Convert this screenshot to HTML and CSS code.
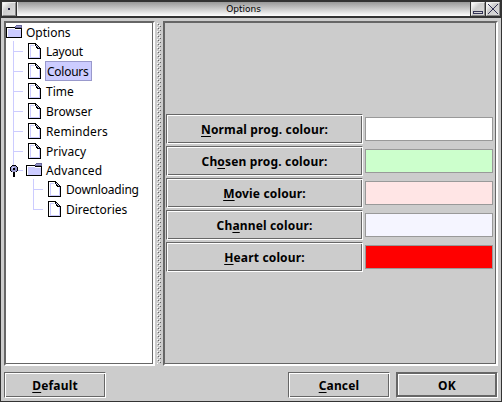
FILE: index.html
```html
<!DOCTYPE html>
<html lang="en">
<head>
<meta charset="utf-8">
<title>Options</title>
<link rel="stylesheet" href="styles.css">
</head>
<body>
<svg class="defs" width="0" height="0">
  <symbol id="folder" viewBox="0 0 16 13">
    <path fill="#000" d="M0 2h16v11H0z"/>
    <path fill="#ccf" d="M1 3h14v9H1z"/>
    <path fill="#fff" d="M1 3h8v1H2v8H1zM9 4h6v1H9z"/>
    <path fill="#669" d="M9 1h1V0h6v3H9z"/>
    <path fill="#000" d="M8 2h1v1H8zM9 3h7v1H9z"/>
    <path fill="#99c" d="M10 1h5v1h-5z"/>
  </symbol>
  <symbol id="leaf" viewBox="0 0 13 16">
    <path fill="#000" d="M0 0h8v1h1v1h1v1h1v1h1v1h1v11H0z"/>
    <path fill="#fff" d="M1 1h6v1h1v3h1v1h3v9H1z"/>
    <path fill="#ccf" d="M2 2h1v12H2zM2 14h10v1H2zM11 6h1v9h-1zM2 2h4v1H2zM8 2h1v1H8zM9 3h1v1H9zM10 4h1v1h-1z"/>
    <path fill="#000" d="M7 1h1v2H7zM8 3h1v2H8zM9 5h3v1H9z"/>
  </symbol>
  <symbol id="handle" viewBox="0 0 8 13">
    <path fill="#000" d="M2 1h4v1h1v1h1v4H7v1H5v5H3V8H1V7H0V3h1V2h1z"/>
    <path fill="#99c" d="M2 2h4v1h1v4H6v1H2V7H1V3h1z"/>
    <path fill="#000" d="M3 4h2v2H3zM3 8h2v1H3z"/>
    <path fill="#ccf" d="M2 3h2v1H3v1H2z"/>
  </symbol>
</svg>
<div class="window">
  <header class="titlebar">
    <div class="tb-btn"><svg width="14" height="14"><path fill="#224" d="M6 6h2v2H6z"/></svg></div>
    <div class="title">Options</div>
    <div class="tb-btn"><svg width="14" height="14"><path fill="none" stroke="#335" d="M2.5 9.5h9v2h-9z"/></svg></div>
    <div class="tb-btn"><svg width="14" height="14"><path fill="none" stroke="#335" d="M2 2L12 12M12 2L2 12"/></svg></div>
  </header>
  <main class="split">
    <div class="pane tree">
      <div class="row branch"><svg class="folder"><use href="#folder"/></svg><span>Options</span></div>
      <div class="children">
        <div class="row"><svg class="leaf"><use href="#leaf"/></svg><span class="tight">Layout</span></div>
        <div class="row"><svg class="leaf"><use href="#leaf"/></svg><span class="selected">Colours</span></div>
        <div class="row"><svg class="leaf"><use href="#leaf"/></svg><span>Time</span></div>
        <div class="row"><svg class="leaf"><use href="#leaf"/></svg><span>Browser</span></div>
        <div class="row"><svg class="leaf"><use href="#leaf"/></svg><span class="wide">Reminders</span></div>
        <div class="row"><svg class="leaf"><use href="#leaf"/></svg><span>Privacy</span></div>
        <div class="row branch"><svg class="handle"><use href="#handle"/></svg><svg class="folder"><use href="#folder"/></svg><span class="wide">Advanced</span></div>
        <div class="children">
          <div class="row"><svg class="leaf"><use href="#leaf"/></svg><span class="tight">Downloading</span></div>
          <div class="row"><svg class="leaf"><use href="#leaf"/></svg><span>Directories</span></div>
        </div>
      </div>
    </div>
    <div class="divider"></div>
    <div class="pane settings">
      <div class="setting"><button class="btn"><span><u>N</u>ormal prog. colour:</span></button><div class="swatch normal"></div></div>
      <div class="setting"><button class="btn"><span>Ch<u>o</u>sen prog. colour:</span></button><div class="swatch chosen"></div></div>
      <div class="setting"><button class="btn"><span><u>M</u>ovie colour:</span></button><div class="swatch movie"></div></div>
      <div class="setting"><button class="btn"><span>Ch<u>a</u>nnel colour:</span></button><div class="swatch channel"></div></div>
      <div class="setting"><button class="btn"><span><u>H</u>eart colour:</span></button><div class="swatch heart"></div></div>
    </div>
  </main>
  <footer class="actions">
    <button class="btn"><span><u>D</u>efault</span></button>
    <div class="gap"></div>
    <button class="btn"><span><u>C</u>ancel</span></button>
    <button class="btn primary"><span>OK</span></button>
  </footer>
</div>
</body>
</html>
```
FILE: styles.css
```css
* { box-sizing: border-box; }
body { margin: 0; overflow: hidden; font: 12px/18px "Noto Sans", "Open Sans", sans-serif; color: #000; }
svg { display: block; shape-rendering: crispEdges; flex: none; }
.defs { position: absolute; }

.window { width: 502px; height: 402px; display: flex; flex-direction: column; background: #ccc; border: 1px solid #333; border-top: 0; }

.titlebar { height: 18px; margin: 0 -1px; padding: 2px 2px 0; display: flex; gap: 1px; background: #333; border: 0 solid #333; border-bottom-width: 2px; }
.tb-btn { width: 14px; height: 14px; background: linear-gradient(135deg, #fff, #ccc 40%, #ddd); border: 1px solid #eee; border-right-color: #888; border-bottom-color: #888; }
.tb-btn svg { margin: -1px; }
.title { flex: 1; height: 14px; padding-right: 1px; border-left: 1px solid #eee; background: linear-gradient(#999, #fff); font: 9px/15px "DejaVu Sans", sans-serif; text-align: center; }

.split { flex: 1; display: flex; padding: 3px 3px 0; }
.pane { height: 345px; border: 2px solid #666; border-right-color: #fff; border-bottom-color: #fff; box-shadow: inset -1px -1px #666; }
.tree { width: 151px; background: #fff; }
.divider { width: 4px; margin: 2px 2px; background: radial-gradient(circle at .5px .5px, #fff .6px, transparent .7px) 0 0/4px 4px, radial-gradient(circle at 1.5px 1.5px, #666 .6px, transparent .7px) 0 0/4px 4px, radial-gradient(circle at 2.5px 2.5px, #fff .6px, transparent .7px) 0 0/4px 4px, radial-gradient(circle at 3.5px 3.5px, #666 .6px, transparent .7px) 0 0/4px 4px; }
.settings { width: 335px; padding: 91px 0 0 1px; margin-left: auto; display: flex; flex-direction: column; gap: 2px; }

.row { height: 20px; display: flex; align-items: center; position: relative; }
.row.branch { height: 18px; align-items: flex-start; }
.row span { height: 20px; line-height: 22px; padding: 0 2px 0 1px; margin-left: 3px; white-space: nowrap; }
.row.branch span { height: 18px; line-height: 20px; }
.row .tight { letter-spacing: -.2px; }
.row .wide { letter-spacing: .12px; }
.row .selected { width: 47px; background: #ccf; box-shadow: inset 0 0 0 1px #99c; padding: 0 0 0 2px; letter-spacing: -.25px; }
.folder { width: 16px; height: 13px; margin-top: 2px; }
.leaf { width: 13px; height: 16px; margin: 0 1px 0 2px; }
.handle { position: absolute; left: -16px; top: 3px; width: 8px; height: 13px; }
.children { padding-left: 20px; background: linear-gradient(#ccf 0 0) 7px 0/1px 130px no-repeat; }
.children .row::before { content: ""; position: absolute; left: -12px; top: 10px; width: 9px; height: 1px; background: #ccf; }
.children .row.branch::before { top: 9px; left: -8px; width: 5px; }
.children .children { background-size: 1px 31px; }

.setting { display: flex; align-items: center; gap: 2px; height: 30px; }
.setting .btn { width: 197px; height: 30px; }
.swatch { width: 128px; height: 24px; border: 1px solid #999; }
.normal { background: #fff; }
.chosen { background: #cfc; }
.movie { background: #ffe5e5; }
.channel { background: #f5f5ff; }
.heart { background: #f00; }

.btn { margin: 0; padding: 1px 0 0 0; background: #ccc; color: #000; font: bold 12px/18px "Noto Sans", "Open Sans", sans-serif; letter-spacing: .16px; border: 1px solid #666; border-right-color: #fff; border-bottom-color: #fff; box-shadow: inset 1px 1px #fff, inset -1px -1px #666; }
.btn span { display: block; }
.btn u { text-underline-offset: 2px; text-decoration-thickness: 1px; text-decoration-skip-ink: none; }

.actions { height: 35px; padding: 6px 3px 0; display: flex; gap: 6px; }
.actions .btn { width: 102px; height: 26px; }
.actions .gap { flex: 1; }
.actions .primary { box-shadow: inset 1px 1px #666, inset -2px -2px #666, inset 2px 2px #fff; }
```
